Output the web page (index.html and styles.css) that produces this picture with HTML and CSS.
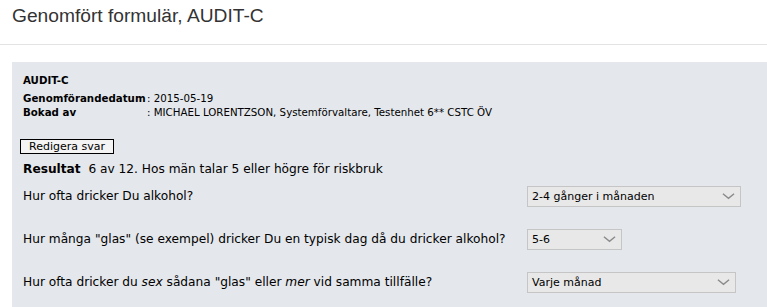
FILE: index.html
```html
<!DOCTYPE html>
<html lang="sv">
<head>
<meta charset="utf-8">
<title>Genomfört formulär, AUDIT-C</title>
<link rel="stylesheet" href="styles.css">
</head>
<body>
<header class="page-header">
  <h1 class="page-title">Genomfört formulär, AUDIT-C</h1>
</header>
<main class="content">
  <section class="panel">
    <div class="info">
      <div class="info-title">AUDIT-C</div>
      <div class="info-row">
        <span class="info-label">Genomförandedatum</span>
        <span class="info-value">: 2015-05-19</span>
      </div>
      <div class="info-row">
        <span class="info-label">Bokad av</span>
        <span class="info-value">: MICHAEL LORENTZSON, Systemförvaltare, Testenhet 6** CSTC ÖV</span>
      </div>
    </div>
    <button class="edit-btn" type="button">Redigera svar</button>
    <p class="result"><b>Resultat</b>&nbsp; 6 av 12. Hos män talar 5 eller högre för riskbruk</p>
    <div class="questions">
      <div class="question">Hur ofta dricker Du alkohol?</div>
      <div class="answer">
        <div class="select select-wide">2-4 gånger i månaden<svg class="chev" viewBox="0 0 14 8"><path d="M1 1.5 L7 6.5 L13 1.5" fill="none" stroke="#8a8a8a" stroke-width="1.5"/></svg></div>
      </div>
      <div class="question">Hur många "glas" (se exempel) dricker Du en typisk dag då du dricker alkohol?</div>
      <div class="answer">
        <div class="select select-narrow">5-6<svg class="chev" viewBox="0 0 14 8"><path d="M1 1.5 L7 6.5 L13 1.5" fill="none" stroke="#8a8a8a" stroke-width="1.5"/></svg></div>
      </div>
      <div class="question">Hur ofta dricker du <i>sex</i> sådana "glas" eller <i>mer</i> vid samma tillfälle?</div>
      <div class="answer">
        <div class="select select-mid">Varje månad<svg class="chev" viewBox="0 0 14 8"><path d="M1 1.5 L7 6.5 L13 1.5" fill="none" stroke="#8a8a8a" stroke-width="1.5"/></svg></div>
      </div>
    </div>
  </section>
</main>
</body>
</html>
```
FILE: styles.css
```css
html, body {
  margin: 0;
  padding: 0;
  background: #fff;
  overflow: hidden;
}
body {
  font-family: "DejaVu Sans", Verdana, sans-serif;
  color: #000;
}
.page-header {
  height: 45px;
  border-bottom: 1px solid #e3e3e3;
  box-sizing: border-box;
  padding: 4px 12px 0;
}
.page-title {
  margin: 0;
  font-family: "Liberation Sans", Arial, sans-serif;
  font-weight: normal;
  font-size: 19.2px;
  line-height: 24px;
  color: #333;
}
.content {
  padding: 17px 0 0 12px;
}
.panel {
  background: #e4e7eb;
  padding: 11px 0 15px 11px;
}
.info {
  font-size: 10.25px;
}
.info-title {
  font-weight: bold;
  line-height: 15px;
  margin-bottom: 3px;
}
.info-row {
  display: flex;
  line-height: 14px;
}
.info-label {
  font-weight: bold;
  width: 124px;
  flex: none;
}
.info-value {
  white-space: nowrap;
}
.edit-btn {
  display: block;
  margin: 20px 0 0 -3px;
  padding: 0 8px;
  height: 15px;
  font-family: "DejaVu Sans", Verdana, sans-serif;
  font-size: 11px;
  line-height: 13px;
  color: #000;
  background: #f4f4f4;
  border: 1px solid #000;
  border-radius: 0;
}
.result {
  margin: 7px 0 0;
  font-size: 12.2px;
  line-height: 16px;
}
.questions {
  display: grid;
  grid-template-columns: 504px auto;
  grid-auto-rows: 22px;
  row-gap: 21px;
  align-items: center;
  margin-top: 8px;
  font-size: 12.2px;
}
.answer {
  display: flex;
}
.select {
  display: flex;
  align-items: center;
  justify-content: space-between;
  box-sizing: border-box;
  height: 21px;
  padding: 0 5px 0 4px;
  background: #e8e8e8;
  border: 1px solid #c5c5c5;
  font-size: 11px;
}
.select-wide { width: 214px; }
.select-narrow { width: 95px; }
.select-mid { width: 209px; }
.chev {
  width: 13px;
  height: 8px;
}
```
